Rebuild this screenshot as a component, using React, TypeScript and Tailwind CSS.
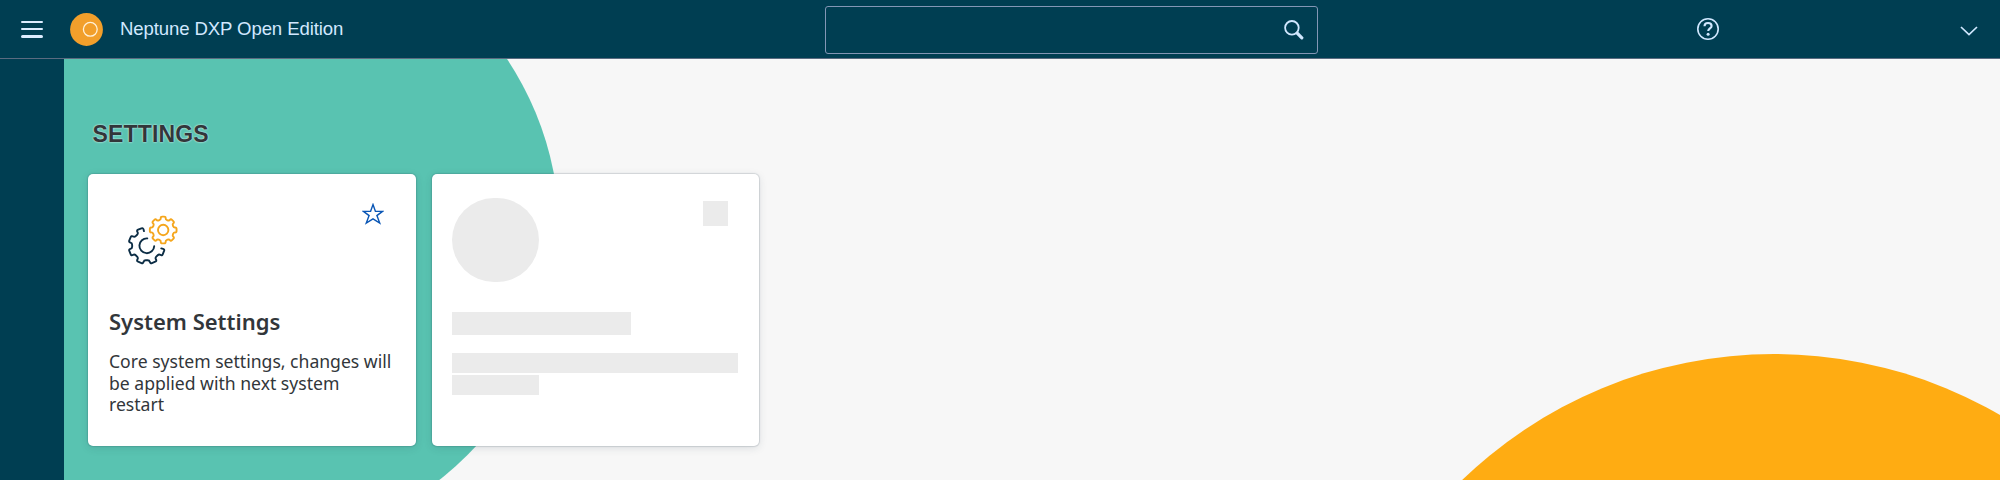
import React from "react";

const polar = (cx: number, cy: number, r: number, deg: number) => {
  const a = (deg * Math.PI) / 180;
  return [cx + r * Math.cos(a), cy + r * Math.sin(a)];
};

function gearPath(cx: number, cy: number, outer: number, inner: number, teeth: number[], closed: boolean) {
  const pts: number[][] = [];
  teeth.forEach((t) => {
    pts.push(polar(cx, cy, inner, t - 12), polar(cx, cy, outer, t - 11), polar(cx, cy, outer, t + 11), polar(cx, cy, inner, t + 12));
  });
  const n = pts.length;
  const toward = (p: number[], q: number[]) => {
    const len = Math.hypot(q[0] - p[0], q[1] - p[1]);
    const k = Math.min(1.7, len / 2) / len;
    return [p[0] + (q[0] - p[0]) * k, p[1] + (q[1] - p[1]) * k];
  };
  const f = (p: number[]) => p[0].toFixed(2) + " " + p[1].toFixed(2);
  let d = "";
  for (let i = 0; i < n; i++) {
    if (!closed && (i === 0 || i === n - 1)) {
      d += (i === 0 ? "M" : "L") + f(pts[i]);
      continue;
    }
    const a = toward(pts[i], pts[(i + n - 1) % n]);
    const b = toward(pts[i], pts[(i + 1) % n]);
    d += (i === 0 ? "M" : "L") + f(a) + "Q" + f(pts[i]) + " " + f(b);
  }
  return d + (closed ? "Z" : "");
}

const darkGear = gearPath(20.7, 31.7, 18.4, 14.8, [22.5, 67.5, 112.5, 157.5, 202.5, 247.5], false);
const goldGear = gearPath(37.2, 16, 13.6, 10.8, [0, 45, 90, 135, 180, 225, 270, 315], true);

function GearsIcon() {
  return (
    <svg className="ml-4 mt-4 h-[54px] w-[54px]" viewBox="0 0 54 54" fill="none" strokeWidth="1.9" strokeLinecap="round" strokeLinejoin="round">
      <path d={darkGear} stroke="#0c2d45" />
      <path d="M21.3 24.4A7.4 7.4 0 1 0 28.2 32.2" stroke="#0c2d45" />
      <path d={goldGear} stroke="#f5a61c" />
      <circle cx="37.2" cy="16" r="5.2" stroke="#f5a61c" />
    </svg>
  );
}

function Header() {
  return (
    <header className="flex h-[59px] shrink-0 items-center border-b border-[#5b6b80] bg-[#003e52] text-[#d1e8ff]">
      <button className="ml-[21px] flex h-[17px] w-[22px] flex-col justify-between" aria-label="Menu">
        <span className="h-[2.6px] w-full rounded-full bg-[#dcedff]" />
        <span className="h-[2.6px] w-full rounded-full bg-[#dcedff]" />
        <span className="h-[2.6px] w-full rounded-full bg-[#dcedff]" />
      </button>
      <svg className="ml-[27px] h-[33px] w-[33px]" viewBox="0 0 33 33">
        <circle cx="16.5" cy="16.5" r="16.4" fill="#f29f2b" />
        <circle cx="20.3" cy="16.3" r="6.9" fill="none" stroke="#fff1d8" strokeWidth="1.3" />
      </svg>
      <div className="ml-[17px] w-[705px] font-['Liberation_Sans',sans-serif] text-[18.6px] leading-6 tracking-[-0.12px] whitespace-nowrap">
        Neptune DXP Open Edition
      </div>
      <div className="mt-px flex h-[48px] w-[493px] items-center justify-end rounded-[3px] border border-[#8396b5] pr-[13px]">
        <svg className="h-5 w-5" viewBox="0 0 20 20" fill="none" stroke="#d1e8ff">
          <circle cx="7.9" cy="7.8" r="6.8" strokeWidth="1.8" />
          <path d="M13.2 13.2L17.8 17.8" strokeWidth="3.2" strokeLinecap="round" />
        </svg>
      </div>
      <svg className="ml-[378px] h-6 w-6" viewBox="0 0 24 24" fill="none" stroke="#d1e8ff" strokeWidth="1.6">
        <circle cx="12" cy="12" r="10.2" />
        <path d="M8.5 9.2C8.5 7 10 6 12 6s3.6 1.1 3.6 3c0 2.3-3.4 2.6-3.4 5" strokeWidth="2.1" />
        <circle cx="12.1" cy="17.2" r="1.5" fill="#d1e8ff" stroke="none" />
      </svg>
      <svg className="ml-[240px] mt-[3px] h-[10px] w-[18px]" viewBox="0 0 18 10" fill="none" stroke="#d1e8ff" strokeWidth="1.7">
        <path d="M1 1L9 8.6L17 1" />
      </svg>
    </header>
  );
}

const cardClass = "h-[272px] w-[327.5px] rounded-[5px] bg-white shadow-[0_0_1px_1px_rgba(34,53,72,0.15),0_2px_8px_rgba(34,53,72,0.13)]";

export default function App() {
  return (
    <div className="flex h-[480px] w-[2000px] flex-col overflow-hidden bg-[#f7f7f7]">
      <Header />
      <div className="flex min-h-0 flex-1">
        <aside className="w-16 shrink-0 bg-[#003e52]" />
        <main className="relative flex-1 overflow-hidden font-['Noto_Sans',sans-serif] text-[#32363a]">
          <svg className="absolute inset-0 h-[421px] w-[1936px]" viewBox="64 59 1936 421">
            <circle cx="245.3" cy="232.8" r="314.2" fill="#59c3b1" />
            <circle cx="1774" cy="803" r="449" fill="#ffac12" />
          </svg>
          <div className="relative pl-6 pt-[58px]">
            <h1 className="ml-[4.5px] h-[57px] font-['Liberation_Sans',sans-serif] text-[23px] leading-[34px] font-bold tracking-[0.15px] [text-shadow:0_0_2px_#fff]">
              SETTINGS
            </h1>
            <div className="flex gap-4">
              <article className={cardClass + " px-[21px] pt-[24px]"}>
                <div className="flex h-[105px] justify-between">
                  <div className="pl-px">
                    <GearsIcon />
                  </div>
                  <svg className="mt-[5px] mr-[11px] h-[22px] w-[22px]" viewBox="0 0 22 22" fill="none" stroke="#0a56b5" strokeWidth="1.4">
                    <path d="M11 1.6L13.4 8.3L20.5 8.4L14.9 12.6L17.7 20L11 15.8L4.3 20L7.1 12.6L1.5 8.4L8.6 8.3Z" />
                  </svg>
                </div>
                <h2 className="mt-[2px] text-[22px] leading-8 font-semibold whitespace-nowrap">System Settings</h2>
                <p className="mt-[14px] text-[17.6px] leading-[21.5px] tracking-[-0.01px] whitespace-nowrap">
                  Core system settings, changes will
                  <br />
                  be applied with next system
                  <br />
                  restart
                </p>
              </article>
              <article className={cardClass + " pl-[20.5px] pr-[19px] pt-6"}>
                <div className="flex justify-between">
                  <div className="h-[84px] w-[87px] rounded-full bg-[#ebebeb]" />
                  <div className="mt-[3px] mr-3 h-[25px] w-[25px] bg-[#ebebeb]" />
                </div>
                <div className="mt-[30px] h-[23px] w-[179px] bg-[#ebebeb]" />
                <div className="mt-[18px] h-5 w-[286px] bg-[#ebebeb]" />
                <div className="mt-[2px] h-5 w-[87px] bg-[#ebebeb]" />
              </article>
            </div>
          </div>
        </main>
      </div>
    </div>
  );
}
